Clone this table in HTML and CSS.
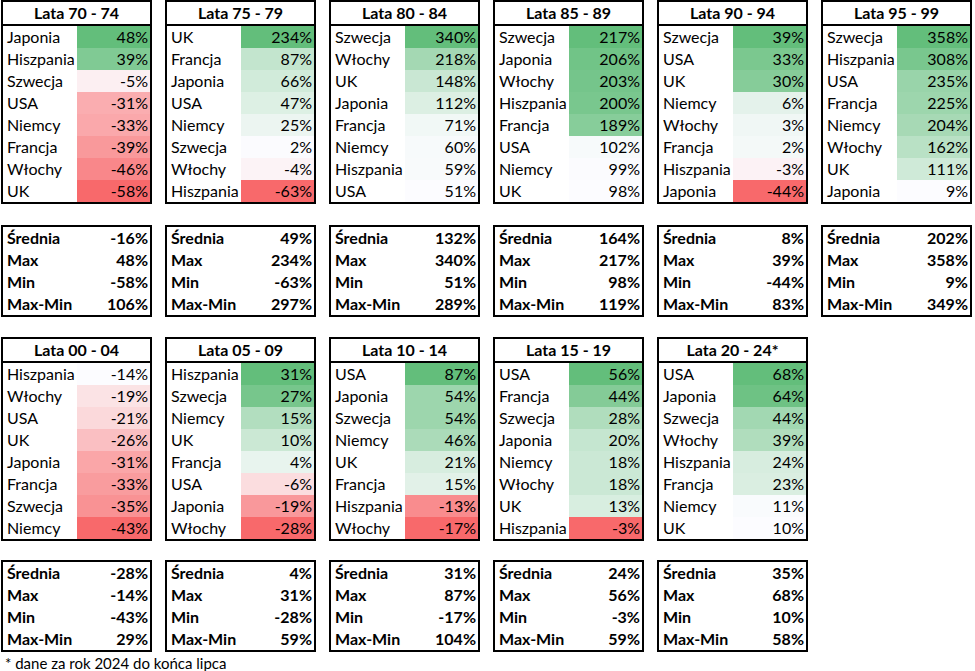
FILE: index.html
```html
<!DOCTYPE html>
<html lang="pl">
<head>
<meta charset="utf-8">
<title>Stopy zwrotu</title>
<link rel="stylesheet" href="styles.css">
</head>
<body>
<div class="page" id="page"></div>
<p class="note">* dane za rok 2024 do końca lipca</p>
<script src="script.js"></script>
</body>
</html>
```

FILE: styles.css
```css
html, body { margin: 0; padding: 0; background: #fff; }
body { font-family: Lato, "Noto Sans", sans-serif; color: #000; font-size: 16px; }
.page { padding: 0 0 0 1px; }
.grid { display: grid; grid-template-columns: repeat(6, 151px); column-gap: 13px; }
.grid.main { margin-top: 0; }
.grid.stats { margin-top: 21px; }
.grid.main.second-main { margin-top: 20px; }
.grid.stats.second-stats { margin-top: 19px; }
.tbl { border: 2px solid #000; box-sizing: border-box; width: 151px; }
.hdr { height: 22px; line-height: 22px; text-align: center; font-weight: 700; border-bottom: 2px solid #000; }
.row { display: grid; grid-template-columns: 74px 73px; height: 22px; line-height: 22px; }
.name { padding-left: 4px; white-space: nowrap; }
.val { text-align: right; padding-right: 2px; }
.stats .row { font-weight: 700; }
.note { margin: 2px 0 0 5px; font-size: 15px; line-height: 18px; }
```

FILE: script.js
```js
var data = [
  ["Lata 70 - 74", [["Japonia",48],["Hiszpania",39],["Szwecja",-5],["USA",-31],["Niemcy",-33],["Francja",-39],["Włochy",-46],["UK",-58]], [-16,48,-58,106]],
  ["Lata 75 - 79", [["UK",234],["Francja",87],["Japonia",66],["USA",47],["Niemcy",25],["Szwecja",2],["Włochy",-4],["Hiszpania",-63]], [49,234,-63,297]],
  ["Lata 80 - 84", [["Szwecja",340],["Włochy",218],["UK",148],["Japonia",112],["Francja",71],["Niemcy",60],["Hiszpania",59],["USA",51]], [132,340,51,289]],
  ["Lata 85 - 89", [["Szwecja",217],["Japonia",206],["Włochy",203],["Hiszpania",200],["Francja",189],["USA",102],["Niemcy",99],["UK",98]], [164,217,98,119]],
  ["Lata 90 - 94", [["Szwecja",39],["USA",33],["UK",30],["Niemcy",6],["Włochy",3],["Francja",2],["Hiszpania",-3],["Japonia",-44]], [8,39,-44,83]],
  ["Lata 95 - 99", [["Szwecja",358],["Hiszpania",308],["USA",235],["Francja",225],["Niemcy",204],["Włochy",162],["UK",111],["Japonia",9]], [202,358,9,349]],
  ["Lata 00 - 04", [["Hiszpania",-14],["Włochy",-19],["USA",-21],["UK",-26],["Japonia",-31],["Francja",-33],["Szwecja",-35],["Niemcy",-43]], [-28,-14,-43,29]],
  ["Lata 05 - 09", [["Hiszpania",31],["Szwecja",27],["Niemcy",15],["UK",10],["Francja",4],["USA",-6],["Japonia",-19],["Włochy",-28]], [4,31,-28,59]],
  ["Lata 10 - 14", [["USA",87],["Japonia",54],["Szwecja",54],["Niemcy",46],["UK",21],["Francja",15],["Hiszpania",-13],["Włochy",-17]], [31,87,-17,104]],
  ["Lata 15 - 19", [["USA",56],["Francja",44],["Szwecja",28],["Japonia",20],["Niemcy",18],["Włochy",18],["UK",13],["Hiszpania",-3]], [24,56,-3,59]],
  ["Lata 20 - 24*", [["USA",68],["Japonia",64],["Szwecja",44],["Włochy",39],["Hiszpania",24],["Francja",23],["Niemcy",11],["UK",10]], [35,68,10,58]]
];
var WHITE = [252,252,255], RED = [248,105,107], GREEN = [99,190,123];
function mix(a, b, t) {
  return "rgb(" + [0,1,2].map(function(i){ return Math.round(a[i] + (b[i]-a[i])*t); }).join(",") + ")";
}
function colorFor(v, min, max) {
  var mid = Math.min(Math.max(0, min), max);
  if (v >= mid) { return max === mid ? mix(WHITE, GREEN, 0) : mix(WHITE, GREEN, (v-mid)/(max-mid)); }
  return mix(WHITE, RED, (mid-v)/(mid-min));
}
function el(tag, cls, text) {
  var e = document.createElement(tag);
  if (cls) e.className = cls;
  if (text !== undefined) e.textContent = text;
  return e;
}
var page = document.getElementById("page");
var labels = ["Średnia","Max","Min","Max-Min"];
[[0,6],[6,11]].forEach(function(range, gi) {
  var main = el("div", "grid main" + (gi === 1 ? " second-main" : ""));
  var stats = el("div", "grid stats" + (gi === 1 ? " second-stats" : ""));
  data.slice(range[0], range[1]).forEach(function(d) {
    var t = el("div", "tbl");
    t.appendChild(el("div", "hdr", d[0]));
    var vals = d[1].map(function(r){ return r[1]; });
    var mn = Math.min.apply(null, vals), mx = Math.max.apply(null, vals);
    d[1].forEach(function(r) {
      var row = el("div", "row");
      row.appendChild(el("div", "name", r[0]));
      var v = el("div", "val", r[1] + "%");
      v.style.background = colorFor(r[1], mn, mx);
      row.appendChild(v);
      t.appendChild(row);
    });
    main.appendChild(t);
    var s = el("div", "tbl");
    d[2].forEach(function(x, i) {
      var row = el("div", "row");
      row.appendChild(el("div", "name", labels[i]));
      row.appendChild(el("div", "val", x + "%"));
      s.appendChild(row);
    });
    stats.appendChild(s);
  });
  page.appendChild(main);
  page.appendChild(stats);
});
```
